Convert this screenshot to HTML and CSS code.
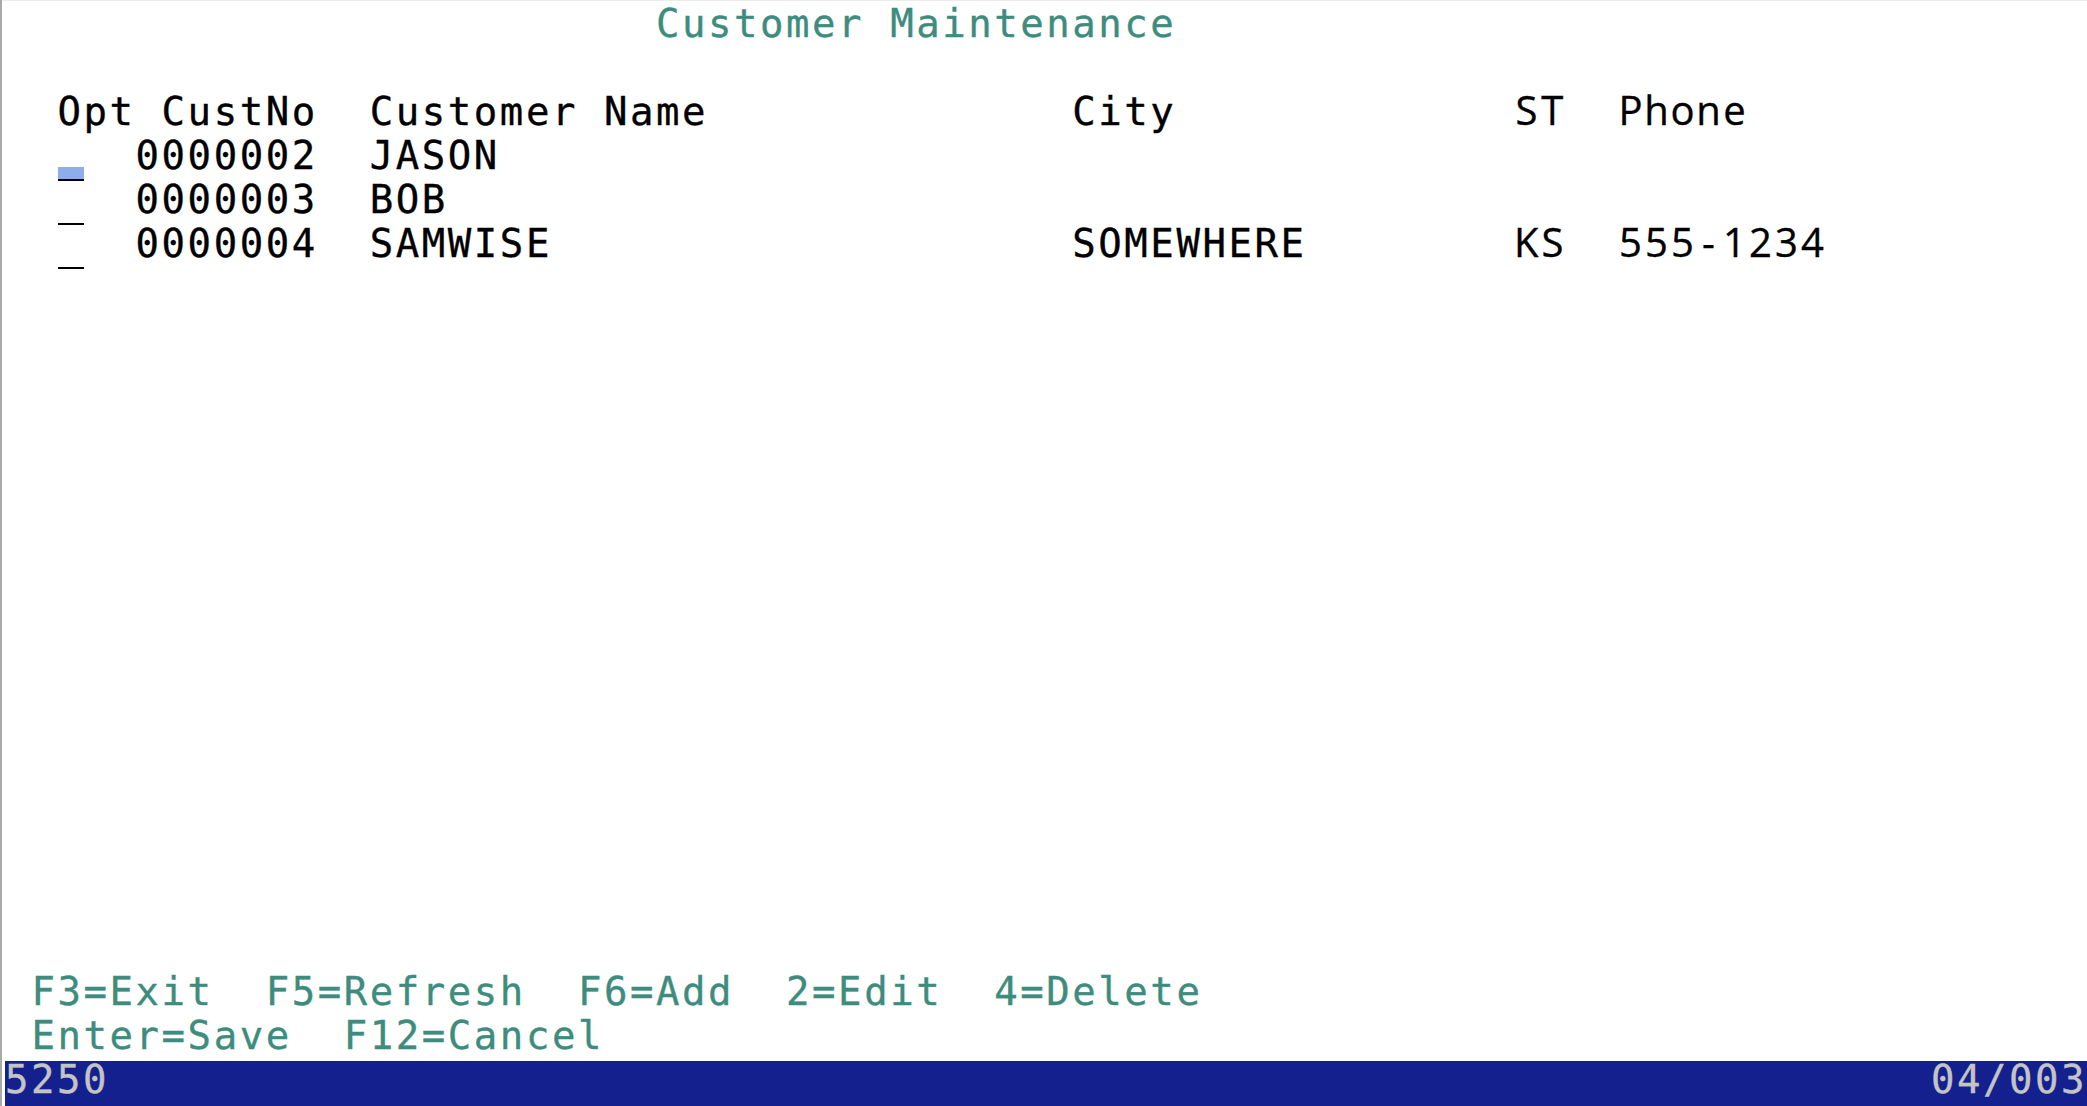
FILE: index.html
```html
<!DOCTYPE html>
<html lang="en">
<head>
<meta charset="utf-8">
<title>Customer Maintenance</title>
<link rel="stylesheet" href="styles.css">
</head>
<body>
<div class="terminal">
  <div class="screen">
    <div class="row"><span class="c25 hi">Customer Maintenance</span></div>
    <div class="row"></div>
    <div class="row">
      <span class="c2">Opt CustNo  Customer Name</span>
      <span class="c41">City</span>
      <span class="c58 prop"><i>S</i><i>T</i></span>
      <span class="c62 prop"><i>P</i><i>h</i><i>o</i><i>n</i><i>e</i></span>
    </div>
    <div class="row">
      <span class="c2 field cursor"></span>
      <span class="c5">0000002</span>
      <span class="c14">JASON</span>
    </div>
    <div class="row">
      <span class="c2 field"></span>
      <span class="c5">0000003</span>
      <span class="c14">BOB</span>
    </div>
    <div class="row">
      <span class="c2 field"></span>
      <span class="c5">0000004</span>
      <span class="c14">SAMWISE</span>
      <span class="c41">SOMEWHERE</span>
      <span class="c58 prop"><i>K</i><i>S</i></span>
      <span class="c62 prop"><i>5</i><i>5</i><i>5</i><i>-</i><i>1</i><i>2</i><i>3</i><i>4</i></span>
    </div>
    <div class="gap"></div>
    <div class="row"><span class="c1 hi">F3=Exit  F5=Refresh  F6=Add  2=Edit  4=Delete</span></div>
    <div class="row"><span class="c1 hi">Enter=Save  F12=Cancel</span></div>
  </div>
  <div class="status"><span>5250</span><span>04/003</span></div>
</div>
</body>
</html>
```

FILE: styles.css
```css
html, body {
  margin: 0;
  padding: 0;
  background: #ffffff;
  overflow: hidden;
}

.terminal {
  width: 2087px;
  height: 1106px;
  display: flex;
  flex-direction: column;
  font-family: "DejaVu Sans Mono", monospace;
  font-size: 39px;
  color: #000000;
  box-shadow: inset 2px 0 0 #a9a9a9, inset 0 1px 0 #ececec;
}

.screen {
  display: flex;
  flex-direction: column;
  height: 1056px;
  padding: 0 1.2px 0 4.2px;
}

.row {
  display: grid;
  grid-template-columns: repeat(80, minmax(0, 1fr));
  grid-template-rows: 44px;
  height: 44px;
  line-height: 47px;
}

.gap {
  height: 704px;
}

.row > span {
  white-space: pre;
  letter-spacing: 2.54px;
  padding-left: 1.3px;
  -webkit-text-stroke: 0.35px currentColor;
}

.c1 { grid-column-start: 2; }
.c2 { grid-column-start: 3; }
.c5 { grid-column-start: 6; }
.c14 { grid-column-start: 15; }
.c25 { grid-column-start: 26; }
.c41 { grid-column-start: 42; }
.c58 { grid-column-start: 59; }
.c62 { grid-column-start: 63; }

.hi {
  color: #3e8c7e;
}

.row > .prop {
  display: flex;
  font-family: "Open Sans", "Noto Sans", sans-serif;
  font-size: 40px;
  line-height: 43px;
  letter-spacing: 0;
  padding-left: 0;
}

.prop i {
  font-style: normal;
  flex: none;
  width: 26.02px;
  text-align: center;
}

.row > .field {
  align-self: start;
  justify-self: start;
  width: 26px;
  height: 47px;
  padding: 0;
  margin-left: 2px;
  border-bottom: 2px solid #000000;
  -webkit-text-stroke: 0;
}

.row > .cursor {
  background: linear-gradient(to bottom, transparent 35px, #8daeea 35px);
}

.status {
  height: 45px;
  margin: 5px 0 0 5px;
  background: #15208f;
  color: #c4c4c4;
  display: flex;
  justify-content: space-between;
  line-height: 37px;
  letter-spacing: 2.54px;
  white-space: pre;
  -webkit-text-stroke: 0.35px currentColor;
}
```
